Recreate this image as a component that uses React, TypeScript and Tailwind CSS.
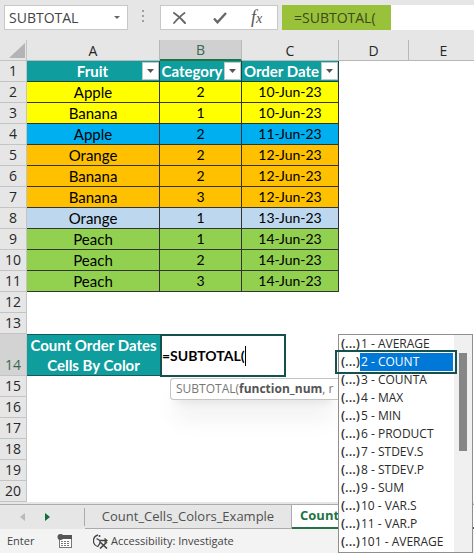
import React, { useState } from "react";

type Row = { fruit: string; category: number; date: string; fill: string };

const rows: Row[] = [
  { fruit: "Apple", category: 2, date: "10-Jun-23", fill: "bg-[#ffff00]" },
  { fruit: "Banana", category: 1, date: "10-Jun-23", fill: "bg-[#ffff00]" },
  { fruit: "Apple", category: 2, date: "11-Jun-23", fill: "bg-[#00aff0]" },
  { fruit: "Orange", category: 2, date: "12-Jun-23", fill: "bg-[#ffc000]" },
  { fruit: "Banana", category: 2, date: "12-Jun-23", fill: "bg-[#ffc000]" },
  { fruit: "Banana", category: 3, date: "12-Jun-23", fill: "bg-[#ffc000]" },
  { fruit: "Orange", category: 1, date: "13-Jun-23", fill: "bg-[#bdd7ee]" },
  { fruit: "Peach", category: 1, date: "14-Jun-23", fill: "bg-[#92d050]" },
  { fruit: "Peach", category: 2, date: "14-Jun-23", fill: "bg-[#92d050]" },
  { fruit: "Peach", category: 3, date: "14-Jun-23", fill: "bg-[#92d050]" },
];

const functions = [
  "1 - AVERAGE",
  "2 - COUNT",
  "3 - COUNTA",
  "4 - MAX",
  "5 - MIN",
  "6 - PRODUCT",
  "7 - STDEV.S",
  "8 - STDEV.P",
  "9 - SUM",
  "10 - VAR.S",
  "11 - VAR.P",
  "101 - AVERAGE",
];

const ui = "font-['Open_Sans','Noto_Sans',sans-serif]";

function RowNumber({ n, active = false }: { n: number; active?: boolean }) {
  return (
    <th
      scope="row"
      className={`border-r border-b border-[#c4c4c4] p-0 text-center align-bottom text-sm leading-5 font-normal ${ui} ${
        active ? "bg-[#d3d3d3] text-[#37694d]" : "bg-[#e6e6e6] text-[#262626]"
      }`}
    >
      {n}
    </th>
  );
}

function HeaderCell({ label, pad }: { label: string; pad: string }) {
  return (
    <td className="border-r border-b border-[#1f3f3f] bg-[#0f9d9d] p-0">
      <div className="flex h-5 items-center">
        <span className={`flex-1 text-center text-[15px] leading-5 font-bold whitespace-nowrap text-white ${pad}`}>
          {label}
        </span>
        <button
          aria-label={`Filter ${label}`}
          className="flex h-[18px] w-[17px] shrink-0 items-center justify-center border border-[#b9cccc] bg-white"
        >
          <svg width="7" height="4" viewBox="0 0 7 4">
            <path d="M0 0h7L3.5 4z" fill="#555" />
          </svg>
        </button>
      </div>
    </td>
  );
}

function EmptyRow({ n }: { n: number }) {
  return (
    <tr className="h-[21px]">
      <RowNumber n={n} />
      <td colSpan={5} className="p-0" />
    </tr>
  );
}

function FormulaBar() {
  return (
    <div className={`flex h-10 items-start pt-[5px] pl-1 ${ui}`}>
      <div className="flex h-[25px] w-[124px] shrink-0 items-center border border-[#c8c8c8] bg-white pr-[7px] pl-1">
        <input
          aria-label="Name box"
          defaultValue="SUBTOTAL"
          className="w-full min-w-0 bg-transparent text-sm text-[#444] outline-none"
        />
        <svg width="6" height="3" viewBox="0 0 6 3" className="shrink-0">
          <path d="M0 0h6L3 3z" fill="#666" />
        </svg>
      </div>
      <svg width="4" height="14" viewBox="0 0 4 14" className="mx-[14px] mt-[5px] shrink-0" fill="#a0a0a0">
        <rect x="0" y="0" width="2" height="2" />
        <rect x="0" y="5" width="2" height="2" />
        <rect x="0" y="10" width="2" height="2" />
      </svg>
      <div className="flex h-[25px] w-[118px] shrink-0 items-center border border-[#c8c8c8] bg-white pl-3">
        <button aria-label="Cancel" className="mr-[27px]">
          <svg width="13" height="12" viewBox="0 0 13 12" fill="none" stroke="#686868" strokeLinecap="round">
            <path d="M1 1C5 3.500 9 7.500 12 11" strokeWidth="2" />
            <path d="M11.500 1C8 3.500 4.500 7 1 11" strokeWidth="1.800" />
          </svg>
        </button>
        <button aria-label="Enter" className="mr-[24px]">
          <svg width="14" height="12" viewBox="0 0 14 12" fill="none" stroke="#686868">
            <path d="M1 6.500L4.500 10.300L13 1" strokeWidth="2.400" />
          </svg>
        </button>
        <button
          aria-label="Insert function"
          className="font-['Liberation_Serif',serif] text-lg leading-5 text-[#555] italic"
        >
          f<span className="text-sm">x</span>
        </button>
      </div>
      <div className="ml-1 flex h-[25px] min-w-0 flex-1 bg-white">
        <input
          aria-label="Formula"
          defaultValue="=SUBTOTAL("
          className="w-[109px] bg-[#99c13a] pl-3 text-sm text-[#3c4a1c] outline-none"
        />
      </div>
    </div>
  );
}

function FunctionList() {
  const [selected, setSelected] = useState(1);
  return (
    <div className={`absolute top-0 left-[178px] z-20 flex h-[219px] w-[135px] border border-[#8f8f8f] bg-white ${ui}`}>
      <div role="listbox" aria-label="Function number" className="flex-1">
        {functions.map((name, i) => {
          const on = i === selected;
          return (
            <button
              key={name}
              role="option"
              aria-selected={on}
              onClick={() => setSelected(i)}
              className="relative flex h-[18px] w-full items-center pl-[2px] text-left"
            >
              <span className="w-[19px] shrink-0 pb-[2px] text-[13px] leading-4 font-semibold text-[#333]">(...)</span>
              <span
                className={`flex-1 pl-px text-xs leading-[18px] whitespace-nowrap ${
                  on ? "bg-[#0078d7] text-white" : "text-[#2b2b2b]"
                }`}
              >
                {name}
              </span>
              {on && <span className="absolute -top-[3px] -right-[4px] -bottom-[3px] -left-[4px] border-2 border-[#14504e]" />}
            </button>
          );
        })}
      </div>
      <div className="ml-[1px] w-[18px] bg-[#f0f0f0] pt-[18px]">
        <div className="mx-auto h-[98px] w-2 bg-[#868686]" />
      </div>
    </div>
  );
}

function Sheet() {
  const column = "border-r border-b border-[#b8b8b8] p-0 text-center align-bottom text-sm leading-[19px] font-normal";
  const cell = "border-r border-b border-[#333] p-0 text-center leading-5 text-black";
  return (
    <table className="w-full table-fixed border-separate border-spacing-0 bg-white font-['Lato',sans-serif]">
      <colgroup>
        <col className="w-[27px]" />
        <col className="w-[133px]" />
        <col className="w-[82px]" />
        <col className="w-[97px]" />
        <col className="w-[70px]" />
        <col />
      </colgroup>
      <thead>
        <tr className={`h-[21px] bg-[#e6e6e6] text-[#262626] ${ui}`}>
          <th className="border-r border-b border-[#c4c4c4] p-0">
            <svg width="16" height="15" viewBox="0 0 16 15" className="ml-[9px]">
              <path d="M16 0v15H0z" fill="#b4b4b4" />
            </svg>
          </th>
          <th scope="col" className={column}>A</th>
          <th scope="col" className="border-r border-b-2 border-r-[#b8b8b8] border-b-[#217346] bg-[#d0d0d0] p-0 text-center align-bottom text-sm leading-[18px] font-normal text-[#37694d]">B</th>
          <th scope="col" className={column}>C</th>
          <th scope="col" className={column}>D</th>
          <th scope="col" className="border-b border-[#b8b8b8] p-0 pl-1 text-center align-bottom text-sm leading-[19px] font-normal">E</th>
        </tr>
      </thead>
      <tbody>
        <tr className="h-[21px]">
          <RowNumber n={1} />
          <HeaderCell label="Fruit" pad="pl-4" />
          <HeaderCell label="Category" pad="pl-0" />
          <HeaderCell label="Order Date" pad="pl-0" />
          <td colSpan={2} className="p-0" />
        </tr>
        {rows.map((r, i) => (
          <tr key={i} className="h-[21px]">
            <RowNumber n={i + 2} />
            <td className={`${cell} text-[15px] ${r.fill}`}>{r.fruit}</td>
            <td className={`${cell} text-sm ${r.fill}`}>{r.category}</td>
            <td className={`${cell} text-sm ${r.fill}`}>{r.date}</td>
            <td colSpan={2} className="p-0" />
          </tr>
        ))}
        <EmptyRow n={12} />
        <EmptyRow n={13} />
        <tr className="h-[42px]">
          <RowNumber n={14} active />
          <td className="border-y border-[#145a5a] bg-[#0f9d9d] p-0 text-center text-[15px] leading-5 font-bold text-white">
            Count Order Dates
            <br />
            Cells By Color
          </td>
          <td colSpan={4} className="p-0">
            <div className="relative h-[42px]">
              <label className="flex h-[43px] w-[126px] items-center border-2 border-[#14504e] bg-white">
                <input
                  aria-label="Cell B14"
                  defaultValue="=SUBTOTAL("
                  className="w-[83px] bg-transparent text-sm font-bold text-black outline-none"
                />
                <span className="h-5 w-px bg-black" />
              </label>
              <div
                className={`absolute top-[44px] left-[10px] z-10 h-[22px] w-[168px] overflow-hidden rounded-l border border-r-0 border-[#c4c4c4] bg-white pl-[5px] text-xs leading-[19px] whitespace-nowrap text-[#777] shadow-xl ${ui}`}
              >
                SUBTOTAL(<b className="text-[#555]">function_num</b>, r
              </div>
              <FunctionList />
            </div>
          </td>
        </tr>
        {[15, 16, 17, 18, 19, 20].map((n) => (
          <EmptyRow key={n} n={n} />
        ))}
      </tbody>
    </table>
  );
}

function SheetTabs() {
  return (
    <div className={`mt-[2px] flex h-[25px] border-t border-[#ababab] bg-[#e6e6e6] ${ui}`}>
      <button aria-label="Previous sheet" className="pl-5">
        <svg width="5" height="8" viewBox="0 0 5 8">
          <path d="M5 0v8L0 4z" fill="#b9b9b9" />
        </svg>
      </button>
      <button aria-label="Next sheet" className="pl-5">
        <svg width="5" height="8" viewBox="0 0 5 8">
          <path d="M0 0v8l5-4z" fill="#146b3c" />
        </svg>
      </button>
      <span className="mt-[3px] ml-[34px] h-[18px] w-px bg-[#ababab]" />
      <button className="w-[207px] border-r border-b border-[#ababab] text-[13px] whitespace-nowrap text-[#505050]">
        Count_Cells_Colors_Example
      </button>
      <button className="min-w-0 flex-1 border-b-2 border-[#217346] bg-white pl-2 text-left text-[13px] font-bold whitespace-nowrap text-[#217346]">
        Count
      </button>
    </div>
  );
}

function StatusBar() {
  return (
    <div className={`flex h-6 items-center bg-[#f3f3f3] pl-[7px] text-[11px] text-[#444] ${ui}`}>
      <span className="w-[50px]">Enter</span>
      <svg width="16" height="14" viewBox="0 0 16 14" className="mr-5">
        <rect x="2.500" y="2.500" width="12" height="11" fill="#fff" stroke="#777" />
        <path d="M5 1h10v4H5z" fill="#555" />
        <circle cx="3.500" cy="3" r="3" fill="#555" />
        <path d="M4 7.500h9M4 9.500h9M4 11.500h9" stroke="#777" strokeDasharray="2 1" />
      </svg>
      <button className="flex items-center gap-[3px] whitespace-nowrap">
        <svg width="15" height="15" viewBox="0 0 15 15" fill="none" stroke="#444" strokeWidth="1.300">
          <path d="M5 1A6 6 0 0 0 4.500 12.500" />
          <circle cx="6.500" cy="2" r="1" fill="#444" stroke="none" />
          <path d="M3.500 4.500L7 6.500H14M7 6.500V9L4.500 13M11.500 4.500l2.500 2-2.500 2" />
          <path d="M7 8l7 6.500M14 8l-7 6.500" strokeWidth="1.600" />
        </svg>
        Accessibility: Investigate
      </button>
    </div>
  );
}

export default function App() {
  return (
    <div className="min-h-screen overflow-hidden bg-[#e6e6e6]">
      <FormulaBar />
      <Sheet />
      <div className="bg-white">
        <SheetTabs />
      </div>
      <StatusBar />
    </div>
  );
}
